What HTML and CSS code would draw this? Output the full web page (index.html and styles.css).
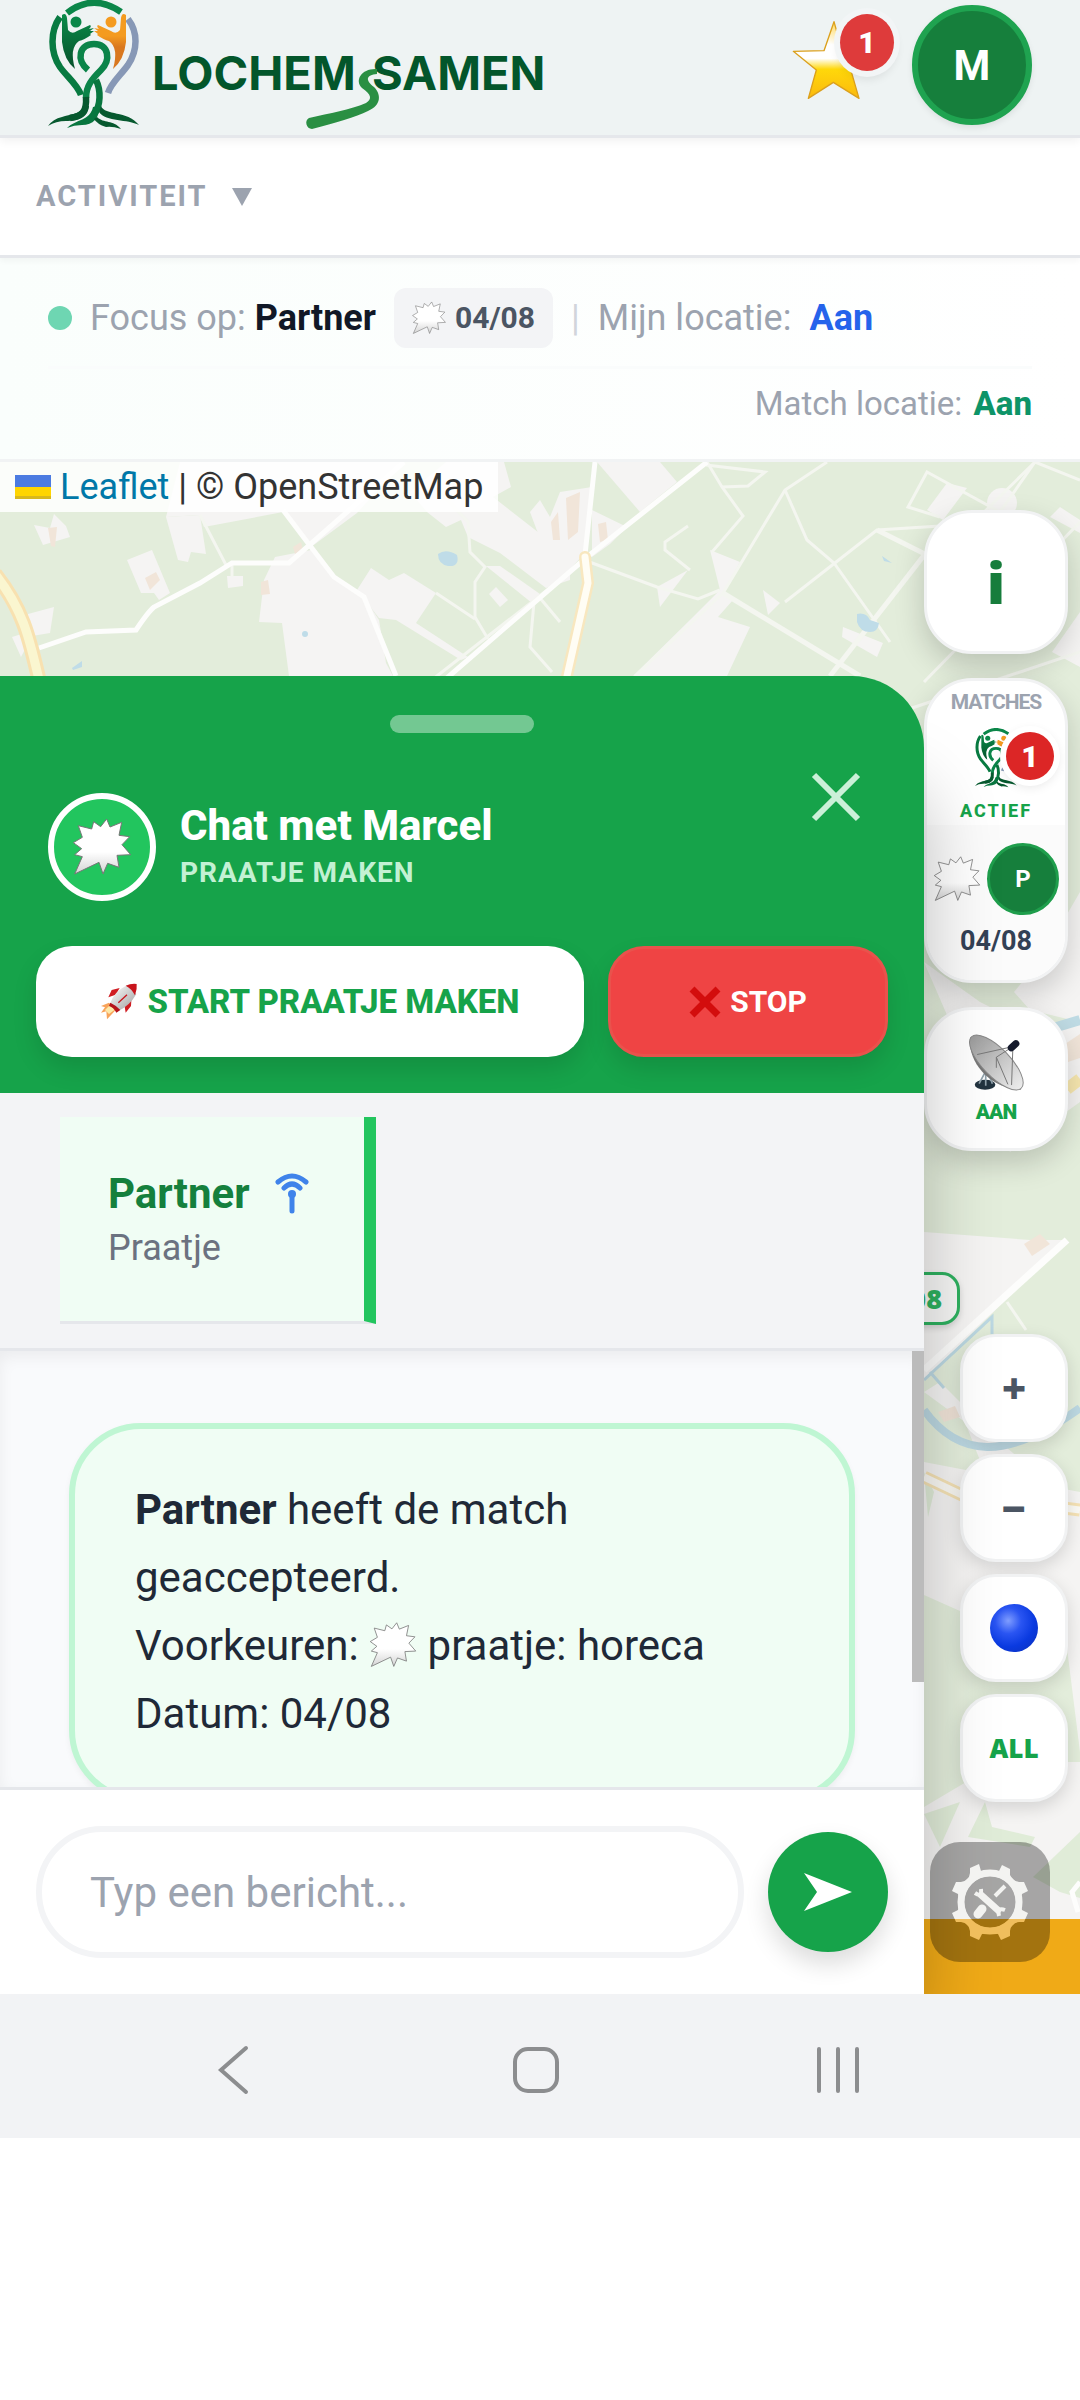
FILE: index.html
```html
<!DOCTYPE html>
<html lang="nl">
  <head>
    <meta charset="UTF-8" />
    <meta name="viewport" content="width=device-width, initial-scale=1.0" />
    <title>Lochem Samen</title>
    <link rel="stylesheet" href="styles.css">
  </head>
  <body>
    <!-- Shared icons -->
    <svg class="sprite" aria-hidden="true">
      <defs>
        <linearGradient id="treeGreen" x1="0" y1="0" x2="0" y2="1">
          <stop offset="0" stop-color="#0b8c4a" />
          <stop offset="1" stop-color="#06502b" />
        </linearGradient>
        <linearGradient id="treeOrange" x1="0" y1="0" x2="0" y2="1">
          <stop offset="0.4" stop-color="#f49b20" />
          <stop offset="0.6" stop-color="#d9781f" />
        </linearGradient>
        <linearGradient id="burstFill" x1="0" y1="0" x2="0" y2="1">
          <stop offset="0.6" stop-color="#ffffff" />
          <stop offset="1" stop-color="#d4d4d4" />
        </linearGradient>
      </defs>
      <symbol id="tree" viewBox="46 0 96 130">
        <g fill="none" stroke-width="6.5">
          <path stroke="#0b8649" d="M67 13 Q93 -7 121 12" />
          <path stroke="#087a41" d="M60 17 C50 31 50 52 60 67 C67 77 77 84 81 95" />
          <path stroke="#8798b6" d="M128 19 C138 32 138 50 128 65 C120 76 111 83 108 93" />
          <path stroke="#0b8449" d="M88 70 C76 60 79 44 94 44 C109 44 111 60 101 70 C92 79 86 86 86 98" />
          <path stroke="#07582f" d="M86 97 C87 112 82 116 70 118" />
          <path stroke="#08763f" d="M96 80 C101 90 101 106 94 114" />
        </g>
        <g fill="#07592f">
          <path d="M84 106 C80 115 70 114 62 117 Q53 119 48 126 Q56 121 66 121 C78 121 88 118 89 106 Z" />
          <path fill="#08763f" d="M93 107 C90 121 76 119 67 128 Q74 125 82 125 C93 125 100 118 99 106 Z" />
          <path d="M101 106 C105 116 127 110 139 125 C128 119 106 122 99 112 Z" />
          <path d="M97 117 C104 124 113 119 121 129 Q112 126 106 127 Q97 124 94 119 Z" />
        </g>
        <circle cx="76" cy="22" r="5.5" fill="#0b8649" />
        <path fill="url(#treeGreen)" d="M62 15 Q66 12 67 18 L68 30 Q72 35 77 31 L90 25 Q92 26 89 29 L94 28 L90 31 L94 31 L90 34 L91 35 Q84 40 79 41 Q69 48 75 69 Q64 60 62 42 Z" />
        <circle cx="111" cy="22" r="5.5" fill="#f49b20" />
        <path fill="url(#treeOrange)" d="M126 15 Q122 12 121 18 L120 30 Q116 35 111 31 L98 25 Q96 26 99 29 L94 28 L98 31 L94 31 L98 34 L97 35 Q104 40 109 41 Q119 48 113 69 Q124 60 126 42 Z" />
      </symbol>
      <symbol id="burst" viewBox="0 0 178 174">
        <path fill="url(#burstFill)" stroke="#777" stroke-width="3" d="M18 23 58 33 64 11 85 26 103 3 113 27 148 13 140 52 172 56 149 80 175 110 134 112 140 148 106 136 92 168 80 133 7 168 30 116 7 110 28 92 3 74 30 58Z" />
      </symbol>
    </svg>

    <header class="app-header">
      <a class="brand" href="#" aria-label="Lochem Samen">
        <svg viewBox="48 0 500 130" width="500" height="130">
          <use href="#tree" x="46" y="0" width="96" height="130" />
          <text class="brand-text" x="152" y="90">LOCHEM</text>
          <text class="brand-text" x="372" y="90">SAMEN</text>
          <path fill="#2a8f43" d="M377 69 C362 68 354 80 362 88 C372 95 372 99 366 103 C350 110 330 113 309 118 A6 6 0 0 0 312 129 C335 123 356 117 368 111 C382 105 381 94 374 87 C365 80 366 75 377 74 Z" />
        </svg>
      </a>
      <button class="star-button" type="button" aria-label="Favorieten">
        <svg viewBox="690 57 270 276" width="90" height="92">
          <defs>
            <linearGradient id="starFill" x1="0" y1="0" x2="0" y2="1">
              <stop offset="0" stop-color="#ffd95e" />
              <stop offset="0.3" stop-color="#ffffff" />
              <stop offset="0.48" stop-color="#ffffff" />
              <stop offset="0.62" stop-color="#ffd80a" />
              <stop offset="1" stop-color="#fbb90d" />
            </linearGradient>
          </defs>
          <path fill="url(#starFill)" stroke="#dba01c" stroke-width="4" stroke-linejoin="round" d="M822 65 846 152 943 155 873 212 897 295 820 247 745 295 769 210 700 154 792 152Z" />
        </svg>
        <span class="badge badge-header">1</span>
      </button>
      <button class="avatar" type="button">M</button>
    </header>

    <nav class="activity-bar">
      <button class="activity-toggle" type="button">
        ACTIVITEIT
        <svg viewBox="0 0 20 18" width="20" height="18"><path fill="#9ca3af" d="M0 0H20L10 18Z" /></svg>
      </button>
    </nav>

    <section class="focus-bar">
      <div class="focus-row">
        <span class="focus-dot"></span>
        <span>Focus op: <strong>Partner</strong></span>
        <span class="date-chip">
          <svg width="34" height="34"><use href="#burst" /></svg>
          04/08
        </span>
        <span class="divider">|</span>
        <span>Mijn locatie:</span>
        <span class="on-blue">Aan</span>
      </div>
      <div class="match-row">Match locatie: <span class="on-green">Aan</span></div>
    </section>

    <main class="stage">
      <svg class="map" viewBox="0 0 1080 1532" preserveAspectRatio="xMinYMin slice" aria-hidden="true">
        <rect width="1080" height="1532" fill="#e3eddb" />
        <g fill="#f5f4f3">
          <path d="M166 55 200 53 204 65 283 50 311 85 357 51 404 0 180 0Z" />
          <path d="M166 55 200 53 206 92 191 90 188 100 178 98Z" />
          <path d="M275 95 311 88 332 115 364 135 379 158 386 201 393 214 289 214 282 161 259 160 264 118Z" />
          <path d="M357 128 371 106 389 118 404 111 436 131 416 161 468 195 461 198 396 158 379 156Z" />
          <path d="M427 50 446 65 461 58 468 75 500 91 546 126 570 118 570 95 493 35 511 25 504 0 446 0 410 30Z" />
          <path d="M486 104 500 104 540 132 532 141Z" />
          <path d="M489 132 496 125 508 138 500 145Z" />
          <path d="M127 98 152 88 170 131 159 138 154 131 141 131Z" />
          <path d="M34 63 50 66 54 52 66 64 70 75 43 83Z" />
          <path d="M12 175 28 170 28 152 54 145 50 171 32 174 21 195Z" />
          <path d="M227 114 243 114 243 124 228 126Z" />
          <path d="M530 50 540 38 550 55 560 30 592 25 585 91 560 118 545 90Z" />
          <path d="M592 48 627 65 610 82 592 95Z" />
          <path d="M597 0 660 0 677 20 640 50Z" />
          <path d="M710 88 740 100 723 131 733 138 718 155 750 165 727 214 633 214 693 155 720 128Z" />
          <path d="M688 108 657 125 660 145Z" />
          <path d="M763 128 780 141 768 153Z" />
          <path d="M947 21 967 26 943 58 927 48Z" />
          <circle cx="1002" cy="41" r="15" />
          <path d="M1060 45 1080 58 1080 71 1050 55Z" />
          <path d="M843 165 883 181 877 195 842 175Z" />
          <path d="M1052 190 1080 150 1080 205Z" />
          <path d="M1014 530 Q1040 500 1080 430 V560 L1030 548Z" />
          <path d="M924 500 950 560 1010 690 1080 640 1080 560 1040 570 980 540Z" />
          <path d="M924 770 1030 778 1067 778 924 918Z" />
          <path d="M924 930 965 960 1000 1050 1080 1110 1080 1048 1000 980 940 920Z" />
          <path d="M924 1000 1080 1030 1080 1290 1060 1130 1030 1180 924 1133Z" />
          <path d="M924 1345 1000 1300 1080 1300 1080 1460 924 1460Z" />
        </g>
        <g fill="#e0ecd8">
          <path d="M924 1352 960 1340 940 1385Z" />
          <path d="M985 1340 992 1365 1035 1375 1030 1385 968 1375Z" />
          <path d="M1033 1415 1080 1370 1080 1436 1060 1430Z" />
          <path d="M924 1010 934 1030 928 1055Z" />
        </g>
        <g fill="#f1e5d9">
          <path d="M48 66 57 65 55 85 51 84Z" />
          <path d="M145 116 156 110 160 118 150 128Z" />
          <path d="M261 120 268 118 270 132 261 133Z" />
          <path d="M293 85 301 80 303 88 295 92Z" />
          <path d="M566 36 580 30 578 70 568 78Z" />
          <path d="M598 62 606 60 608 78 600 80Z" />
          <path d="M551 60 558 50 560 78 553 78Z" />
          <path d="M1065 582 1080 572 1080 596 1068 600Z" />
          <path d="M1024 782 1040 772 1050 782 1032 794Z" />
          <path d="M938 950 955 944 960 955 944 960Z" />
        </g>
        <g fill="none" stroke="#f4f6f0" stroke-width="3">
          <path d="M827 0 785 28 723 131 635 214" />
          <path d="M723 131 860 214" stroke-width="5" />
          <path d="M785 28 807 78 834 101 890 180" />
          <path d="M707 0 722 25 743 54 712 90" />
          <path d="M706 3 765 10 748 24 722 25" />
          <path d="M688 64 665 80 665 88 690 108" />
          <path d="M584 98 657 125 698 137 720 128" />
          <path d="M1080 18 1035 0 1000 50 927 10 908 45 940 55" />
          <path d="M1035 0 972 62 877 68 785 140" />
          <path d="M877 68 925 92 830 214" stroke-width="5" />
          <path d="M440 30 468 60 470 90 485 105 475 120 475 155 488 177" />
          <path d="M436 131 475 157 M560 118 410 235 M540 136 560 160 M534 140 530 185 552 210" />
          <path d="M200 53 226 103 M232 101 232 115" />
          <path d="M924 220 1080 60 M900 250 1080 190" />
          <path d="M1007 840 1026 868" />
        </g>
        <g fill="none" stroke="#fdfdfc" stroke-width="5">
          <path d="M39 186 86 170 136 168 Q148 150 154 145 L200 121 232 101 H289 L404 0" />
          <path d="M283 48 311 85 334 115 364 135 396 214" />
          <path d="M707 0 587 95 440 222 M595 0 585 93" />
          <path d="M1067 778 924 908" stroke-width="7" />
          <path d="M1080 1420 1072 1430 1078 1450" />
        </g>
        <path d="M585 95 588 121 567 214" fill="none" stroke="#f8e7bf" stroke-width="12" stroke-linecap="round" />
        <path d="M585 95 588 121 567 214" fill="none" stroke="#fffdf4" stroke-width="7" stroke-linecap="round" />
        <g fill="none">
          <path d="M-5 112 C25 150 30 180 40 222" stroke="#f8e1b0" stroke-width="15" />
          <path d="M-5 112 C25 150 30 180 40 222" stroke="#faf6d0" stroke-width="9" />
          <path d="M924 1015 962 1033 1080 1048" stroke="#f6e3b6" stroke-width="13" />
          <path d="M924 1015 962 1033 1080 1048" stroke="#fbfaf5" stroke-width="7" />
          <path d="M1067 627 1080 617" stroke="#f8e8b0" stroke-width="12" />
          <path d="M924 948 Q950 984 987 985 T1080 946" stroke="#bcd8e2" stroke-width="8" />
          <path d="M1040 570 1080 558" stroke="#bfdbe4" stroke-width="10" />
          <path d="M924 918 992 855 V872 M930 910 944 926" stroke="#bcd8e2" stroke-width="3" />
        </g>
        <g fill="#bfdce8">
          <path d="M438 92 Q446 86 457 93 Q460 105 448 104 Q438 102 438 92Z" />
          <path d="M857 152 Q866 150 870 158 L879 161 Q878 170 870 170 Q860 170 857 160Z" />
          <circle cx="305" cy="172" r="3" />
          <path d="M72 206 82 199 82 205 73 208Z" />
          <path d="M882 94 892 101 884 99Z" />
        </g>
      </svg>
      <div class="date-marker">04/08</div>
      <div class="bottom-banner"></div>

      <div class="attribution">
        <svg viewBox="0 0 36 24" width="36" height="24"><path fill="#4c7be1" d="M0 0H36V12H0Z" /><path fill="#ffd500" d="M0 12H36V24H0Z" /><path fill="#d8b81d" d="M0 21H36V24H0Z" /></svg>
        <span><a href="#">Leaflet</a> | © OpenStreetMap</span>
      </div>

      <section class="chat-panel">
        <div class="chat-top">
          <div class="drag-handle"></div>
          <div class="chat-title-row">
            <div class="chat-avatar"><svg width="60" height="58"><use href="#burst" /></svg></div>
            <div class="chat-names">
              <h1>Chat met Marcel</h1>
              <p>PRAATJE MAKEN</p>
            </div>
            <button class="close-button" type="button" aria-label="Sluiten">
              <svg viewBox="0 0 72 72" width="72" height="72"><path fill="none" stroke="#cbf0d8" stroke-width="6" d="M14 14 58 58M58 14 14 58" /></svg>
            </button>
          </div>
          <div class="chat-actions">
            <button class="action action-start" type="button">
              <svg viewBox="303 903 114 114" width="38" height="38">
                <defs>
                  <linearGradient id="rocketBody" x1="0" y1="0" x2="1" y2="1">
                    <stop offset="0" stop-color="#ffffff" />
                    <stop offset="1" stop-color="#9c9c9c" />
                  </linearGradient>
                </defs>
                <path fill="#f8a45b" d="M330 962 306 972 318 976 306 992 322 988 324 1012 350 984Z" />
                <path fill="#fde9a8" d="M334 968 318 984 330 996 346 984Z" />
                <path fill="#d01c22" d="M362 918 338 924 328 946 350 938ZM398 940 396 972 380 992 376 968Z" />
                <path fill="url(#rocketBody)" d="M334 964 Q344 930 384 910 L412 936 Q392 972 356 988Z" />
                <path fill="#c8141c" d="M380 911 Q396 904 413 906 Q415 922 408 940 Q398 920 380 911Z" />
                <path fill="#b51219" d="M334 962 Q348 968 364 984 L352 992 Q344 976 330 972Z" />
                <path stroke="#c8141c" stroke-width="4" d="M384 938 358 962" />
              </svg>
              START PRAATJE MAKEN
            </button>
            <button class="action action-stop" type="button">
              <svg viewBox="0 0 32 32" width="32" height="32"><path fill="none" stroke="#d30d0d" stroke-width="7" d="M3 3 29 29M29 3 3 29" /></svg>
              STOP
            </button>
          </div>
        </div>

        <div class="chat-tabs">
          <button class="chat-tab" type="button">
            <span class="tab-name">
              Partner
              <svg viewBox="0 0 48 48" width="48" height="48" fill="none" stroke="#3f83ea" stroke-width="5" stroke-linecap="round">
                <path d="M10 12Q24 0 38 12M16 18Q24 10 32 18M24 25V41" />
                <circle cx="24" cy="24" r="4" fill="#3f83ea" stroke="none" />
              </svg>
            </span>
            <span class="tab-type">Praatje</span>
          </button>
        </div>

        <div class="chat-messages">
          <div class="message-list">
            <div class="bubble">
              <strong>Partner</strong> heeft de match<br>
              geaccepteerd.<br>
              Voorkeuren: <svg class="inline-burst" width="48" height="46"><use href="#burst" /></svg> praatje: horeca<br>
              Datum: 04/08
            </div>
          </div>
          <div class="scroll-thumb"></div>
        </div>

        <form class="chat-form">
          <input class="chat-input" type="text" placeholder="Typ een bericht..." aria-label="Typ een bericht" />
          <button class="send-button" type="button" aria-label="Verstuur">
            <svg viewBox="0 0 48 40" width="48" height="40"><path fill="#fff" d="M0 1 48 20 0 39 13 20Z" /></svg>
          </button>
        </form>
      </section>

      <aside class="map-controls">
        <button class="card info-button" type="button">i</button>

        <button class="card matches-card" type="button">
          <span class="matches-label">MATCHES</span>
          <span class="matches-logo">
            <svg width="44" height="60"><use href="#tree" /></svg>
            <span class="badge badge-matches">1</span>
          </span>
          <span class="matches-active">ACTIEF</span>
          <span class="match-item">
            <span class="match-pair">
              <svg width="48" height="46"><use href="#burst" /></svg>
              <span class="match-initial">P</span>
            </span>
            <span class="match-date">04/08</span>
          </span>
        </button>

        <button class="card radar-button" type="button">
          <svg viewBox="205 1128 168 172" width="56" height="57">
            <defs>
              <linearGradient id="dishFill" x1="0" y1="0" x2="1" y2="0">
                <stop offset="0" stop-color="#9b9b9b" />
                <stop offset="1" stop-color="#ececec" />
              </linearGradient>
            </defs>
            <ellipse cx="256" cy="1281" rx="31" ry="15" fill="#22333f" />
            <path stroke="#8fa0aa" stroke-width="5" d="M258 1240 238 1278M258 1240V1284M264 1240 278 1278" />
            <path fill="#777" d="M212 1136 C200 1190 250 1290 365 1296 L350 1270Z" />
            <ellipse cx="290" cy="1214" rx="108" ry="42" transform="rotate(46 290 1214)" fill="url(#dishFill)" stroke="#888" stroke-width="3" />
            <path fill="none" stroke="#777" stroke-width="3" d="M232 1190 340 1166 290 1198V1230M340 1166 336 1282M290 1198 325 1280" />
            <path stroke="#151a2c" stroke-width="21" stroke-linecap="round" d="M335 1170 349 1157" />
          </svg>
          <span class="radar-state">AAN</span>
        </button>

        <div class="zoom-group">
          <button class="card zoom-button" type="button">+</button>
          <button class="card zoom-button" type="button">−</button>
          <button class="card zoom-button" type="button" aria-label="Mijn positie"><span class="blue-ball"></span></button>
          <button class="card zoom-button zoom-all" type="button">ALL</button>
        </div>
      </aside>

      <button class="tools-button" type="button" aria-label="Instellingen">
        <svg viewBox="-40 -40 80 80" width="80" height="80">
          <defs>
            <linearGradient id="gearFill" gradientUnits="userSpaceOnUse" x1="0" y1="-40" x2="0" y2="40">
              <stop offset="0.71" stop-color="#f3f3f1" />
              <stop offset="0.71" stop-color="#f0be5d" />
            </linearGradient>
          </defs>
          <circle r="29" fill="none" stroke="url(#gearFill)" stroke-width="7" />
          <path fill="url(#gearFill)" fill-rule="evenodd" d="M-9 -31 Q0 -28 9 -31 L12 -37 20 -33 20 -27 Q23 -21 29 -20 L34 -20 38 -11 32 -8 Q29 0 32 8 L38 11 34 20 29 20 Q21 21 20 29 L20 34 11 38 8 32 Q0 29 -8 32 L-11 38 -20 34 -20 29 Q-21 21 -29 20 L-34 20 -38 11 -32 8 Q-29 0 -32 -8 L-38 -11 -34 -20 -29 -20 Q-21 -21 -20 -29 L-20 -34 -11 -38ZM26 0A26 26 0 1 0 -26 0A26 26 0 1 0 26 0Z" />
          <path fill="none" stroke="#f3f3f1" stroke-width="7" d="M-10 -8 10 10" />
          <path fill="none" stroke="#f3f3f1" stroke-width="4" d="M-15 -9Q-8 -4 -9 -13M15 8Q7 5 9 14M5 -6 15 -16" />
          <path fill="none" stroke="#f3f3f1" stroke-width="9" stroke-linecap="round" d="M-12 12 -8 7" />
        </svg>
      </button>
    </main>

    <nav class="system-nav">
      <button type="button" aria-label="Terug"><svg viewBox="0 0 48 52" width="48" height="52"><path d="M37 4 12 26 37 48" /></svg></button>
      <button type="button" aria-label="Start"><svg viewBox="0 0 48 52" width="48" height="52"><rect x="3" y="5" width="42" height="42" rx="13" /></svg></button>
      <button type="button" aria-label="Recent"><svg viewBox="0 0 48 52" width="48" height="52"><path d="M5 5V47M24 5V47M43 5V47" /></svg></button>
    </nav>
  </body>
</html>
```
FILE: styles.css
```css
:root {
  --green: #16a34a;
  --green-dark: #15803d;
  --green-light: #22c55e;
  --mint: #f0fdf4;
  --grey-text: #9ca3af;
  --grey-line: #e5e7eb;
  --grey-bg: #f3f4f6;
}

* {
  box-sizing: border-box;
  margin: 0;
  padding: 0;
}

body {
  background: #fff;
  font-family: Roboto, "Liberation Sans", sans-serif;
  color: #1f2937;
}

button,
input {
  font: inherit;
  border: none;
  background: none;
}

svg {
  display: block;
  flex-shrink: 0;
}

.sprite {
  position: absolute;
  width: 0;
  height: 0;
}

/* Header */
.app-header {
  position: relative;
  z-index: 3;
  display: flex;
  align-items: center;
  gap: 32px;
  padding: 0 48px 5px;
  background: #eef3f3;
  border-bottom: 3px solid var(--grey-line);
  box-shadow: 0 3px 9px rgba(0, 0, 0, 0.06);
}

.brand {
  margin-right: auto;
}

.brand-text {
  font-family: Inter, sans-serif;
  font-size: 47px;
  font-weight: 700;
  fill: #03562b;
}

.star-button {
  position: relative;
}

.badge {
  position: absolute;
  display: flex;
  align-items: center;
  justify-content: center;
  border-radius: 50%;
  background: #dc2626;
  color: #fff;
  font-weight: 900;
}

.badge-header {
  top: -5px;
  right: -14px;
  width: 54px;
  height: 57px;
  background: #de3b3b;
  font-size: 30px;
  box-shadow: 0 0 0 6px #f2f5f6, 0 6px 9px 3px rgba(0, 0, 0, 0.08);
}

.avatar {
  width: 120px;
  height: 120px;
  border: 6px solid #1fa350;
  border-radius: 50%;
  background: #167f3c;
  color: #fff;
  font-size: 42px;
  font-weight: 700;
  box-shadow: 0 3px 6px rgba(0, 0, 0, 0.08);
}

.activity-bar {
  position: relative;
  z-index: 2;
  padding: 36px;
  background: #fff;
  border-bottom: 3px solid var(--grey-line);
  box-shadow: 0 3px 6px rgba(0, 0, 0, 0.04);
}

.activity-toggle {
  display: flex;
  align-items: center;
  gap: 24px;
  color: var(--grey-text);
  font-size: 29px;
  font-weight: 700;
  line-height: 45px;
  letter-spacing: 2px;
}

/* Focus bar */
.focus-bar {
  padding: 30px 48px 33px;
  background: linear-gradient(90deg, #fafefc, #fff);
  border-bottom: 3px solid #f1f3f4;
  color: var(--grey-text);
}

.focus-row {
  display: flex;
  align-items: center;
  gap: 18px;
  padding-bottom: 18px;
  border-bottom: 3px solid #fafcfc;
  font-size: 36px;
}

.focus-row strong {
  color: #111827;
}

.focus-dot {
  width: 24px;
  height: 24px;
  border-radius: 50%;
  background: #6ed6b2;
}

.date-chip {
  display: flex;
  align-items: center;
  gap: 9px;
  padding: 0 18px;
  border-radius: 12px;
  background: var(--grey-bg);
  color: #4b5563;
  font-size: 30px;
  font-weight: 700;
  line-height: 60px;
}

.divider {
  color: #d1d5db;
}

.on-blue {
  color: #2563eb;
  font-weight: 700;
}

.match-row {
  padding-top: 12px;
  text-align: right;
  font-size: 33px;
  line-height: 45px;
}

.on-green {
  margin-left: 3px;
  color: #0d9468;
  font-weight: 800;
}

/* Map with chat panel on top */
.stage {
  position: relative;
  display: grid;
  grid-template-columns: 1fr 156px;
  overflow: hidden;
}

.map {
  position: absolute;
  inset: 0;
  width: 100%;
  height: 100%;
}

.attribution {
  position: absolute;
  top: 0;
  left: 0;
  display: flex;
  align-items: center;
  gap: 9px;
  padding: 0 15px;
  background: rgba(255, 255, 255, 0.85);
  color: #333;
  font-size: 36px;
  line-height: 50px;
}

.attribution a {
  color: #0078a8;
  text-decoration: none;
}

.date-marker {
  position: absolute;
  right: 120px;
  top: 810px;
  padding: 0 15px;
  border: 3px solid #2eb05f;
  border-radius: 18px;
  background: #f6f6f5;
  color: #2eb05f;
  font: 800 27px/47px "Open Sans", sans-serif;
  box-shadow: 0 3px 6px rgba(0, 0, 0, 0.15);
}

.bottom-banner {
  position: absolute;
  right: 0;
  bottom: 0;
  left: 0;
  height: 75px;
  background: #f0aa17;
}

.chat-panel {
  position: relative;
  z-index: 2;
  margin-top: 214px;
  border-top-right-radius: 72px;
  box-shadow: 36px 75px 75px -36px rgba(0, 0, 0, 0.25);
}

.chat-top {
  padding: 39px 36px 36px;
  border-top-right-radius: 72px;
  background: var(--green);
}

.drag-handle {
  width: 144px;
  height: 18px;
  margin: 0 auto 28px;
  border-radius: 9px;
  background: rgba(255, 255, 255, 0.4);
}

.chat-title-row {
  display: flex;
  align-items: flex-end;
  gap: 24px;
  height: 140px;
  padding: 0 16px 0 12px;
}

.chat-avatar {
  display: flex;
  align-items: center;
  justify-content: center;
  width: 108px;
  height: 108px;
  border: 6px solid #fff;
  border-radius: 50%;
  background: var(--green-light);
}

.chat-names {
  flex: 1;
  padding-bottom: 10px;
}

.chat-names h1 {
  color: #fff;
  font-size: 42px;
  font-weight: 800;
  line-height: 48px;
}

.chat-names p {
  padding-top: 5px;
  color: #c3f1d3;
  font-size: 28px;
  font-weight: 700;
  line-height: 36px;
  letter-spacing: 1px;
}

.close-button {
  align-self: flex-start;
}

.chat-actions {
  display: flex;
  gap: 24px;
  padding-top: 45px;
}

.action {
  display: flex;
  align-items: center;
  justify-content: center;
  gap: 9px;
  height: 111px;
  border-radius: 36px;
  box-shadow: 0 12px 24px rgba(0, 0, 0, 0.12);
}

.action-start {
  flex: 1;
  background: #fff;
  color: var(--green);
  font-size: 33px;
  font-weight: 800;
}

.action-stop {
  width: 280px;
  border: 3px solid #e9524c;
  background: #ef4444;
  color: #fff;
  font-size: 30px;
  font-weight: 700;
}

.chat-tabs {
  display: flex;
  padding: 24px 60px;
  background: var(--grey-bg);
  border-bottom: 3px solid var(--grey-line);
}

.chat-tab {
  padding: 50px 48px 46px;
  border-right: 12px solid var(--green-light);
  border-bottom: 3px solid var(--grey-line);
  background: var(--mint);
  text-align: left;
  line-height: 54px;
}

.tab-name {
  display: flex;
  align-items: center;
  gap: 18px;
  color: var(--green-dark);
  font-size: 42px;
  font-weight: 700;
}

.tab-type {
  display: block;
  color: #6b7280;
  font-size: 36px;
}

.chat-messages {
  display: flex;
  align-items: flex-start;
  height: 436px;
  overflow: hidden;
  background: #f9fafc;
  box-shadow: inset 0 6px 15px rgba(0, 0, 0, 0.06);
}

.message-list {
  flex: 1;
  padding: 72px 57px 0 69px;
}

.bubble {
  padding: 47px 60px 48px;
  border: 6px solid #bff6d3;
  border-radius: 72px;
  background: var(--mint);
  font-size: 42px;
  line-height: 68px;
  box-shadow: 0 3px 6px rgba(0, 0, 0, 0.05);
}

.inline-burst {
  display: inline-block;
  vertical-align: -8px;
}

.scroll-thumb {
  width: 12px;
  height: 76%;
  background: #bbb;
}

.chat-form {
  display: flex;
  align-items: center;
  gap: 24px;
  padding: 36px;
  background: #fff;
  border-top: 3px solid var(--grey-line);
}

.chat-input {
  flex: 1;
  min-width: 0;
  height: 132px;
  padding: 0 48px;
  border: 6px solid var(--grey-bg);
  border-radius: 66px;
  font-size: 42px;
}

.chat-input::placeholder {
  color: var(--grey-text);
  opacity: 1;
}

.send-button {
  display: flex;
  align-items: center;
  justify-content: center;
  width: 120px;
  height: 120px;
  border-radius: 50%;
  background: var(--green);
  box-shadow: 0 12px 24px rgba(0, 0, 0, 0.14);
}

/* Right column of map buttons */
.map-controls {
  position: relative;
  display: flex;
  flex-direction: column;
  gap: 24px;
  padding: 48px 12px 192px 0;
}

.card {
  display: flex;
  flex-direction: column;
  align-items: center;
  justify-content: center;
  border: 3px solid #f1f2f3;
  border-radius: 48px;
  background: #fff;
  box-shadow: 0 12px 30px rgba(0, 0, 0, 0.18);
}

.info-button {
  height: 144px;
  color: #177d3c;
  font: 800 57px/60px "Open Sans", sans-serif;
}

.matches-card {
  justify-content: flex-start;
  padding-top: 9px;
  overflow: hidden;
}

.matches-label {
  color: var(--grey-text);
  font-size: 21px;
  font-weight: 700;
  line-height: 24px;
  letter-spacing: -1px;
}

.matches-logo {
  position: relative;
  padding: 14px 0 11px;
}

.badge-matches {
  top: 18px;
  right: -36px;
  width: 48px;
  height: 48px;
  font-size: 30px;
  box-shadow: 0 0 0 6px #fff, 0 3px 12px 3px rgba(0, 0, 0, 0.12);
}

.matches-active {
  color: var(--green);
  font-size: 18px;
  font-weight: 800;
  line-height: 24px;
  letter-spacing: 2px;
}

.match-item {
  display: flex;
  flex-direction: column;
  align-items: center;
  align-self: stretch;
  margin-top: 2px;
  padding: 18px 0 21px;
  background: #fbfbfb;
}

.match-pair {
  display: flex;
  align-items: center;
  gap: 6px;
}

.match-initial {
  width: 72px;
  height: 72px;
  border: 3px solid #1f9e4c;
  border-radius: 50%;
  background: #167f3c;
  color: #fff;
  font-size: 24px;
  font-weight: 700;
  line-height: 66px;
}

.match-date {
  padding-top: 8px;
  color: #334155;
  font-size: 27px;
  font-weight: 700;
  line-height: 36px;
}

.radar-button {
  height: 144px;
  gap: 9px;
}

.radar-state {
  color: var(--green);
  font-size: 21px;
  font-weight: 900;
  line-height: 24px;
  letter-spacing: -1px;
}

.zoom-group {
  display: flex;
  flex-direction: column;
  align-items: flex-end;
  gap: 12px;
  margin-top: auto;
}

.zoom-button {
  width: 108px;
  height: 108px;
  border-radius: 36px;
  color: #4b5563;
  font: 800 42px/48px "Open Sans", sans-serif;
  box-shadow: 0 6px 18px rgba(0, 0, 0, 0.14);
}

.zoom-all {
  color: var(--green);
  font-size: 26px;
}

.blue-ball {
  width: 48px;
  height: 48px;
  border-radius: 50%;
  background: radial-gradient(circle at 38% 35%, #7f9dff 0%, #2a55f2 30%, #0a3ae0 60%, #0b2fb4 100%);
}

.tools-button {
  position: absolute;
  right: 30px;
  bottom: 32px;
  z-index: 3;
  display: flex;
  align-items: center;
  justify-content: center;
  width: 120px;
  height: 120px;
  border-radius: 30px;
  background: rgba(0, 0, 0, 0.32);
}

/* Phone navigation */
.system-nav {
  display: flex;
  justify-content: space-between;
  padding: 50px 218px 42px 209px;
  background: #f2f3f5;
}

.system-nav svg {
  fill: none;
  stroke: #8c8d8f;
  stroke-width: 4;
  stroke-linecap: round;
}
```
